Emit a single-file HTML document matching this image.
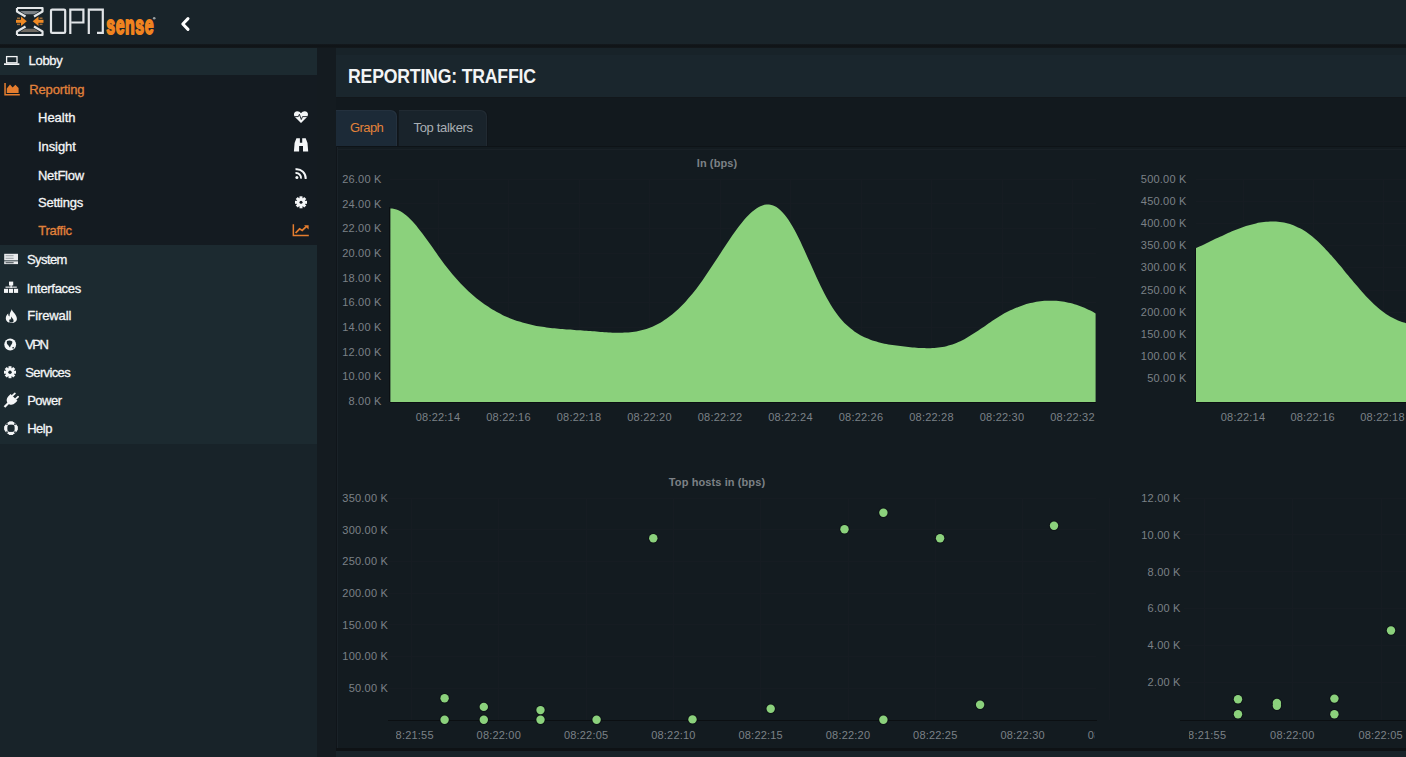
<!DOCTYPE html>
<html><head><meta charset="utf-8"><title>Reporting: Traffic</title>
<style>
*{margin:0;padding:0;box-sizing:border-box}
html,body{width:1406px;height:757px;overflow:hidden;background:#182329;font-family:"Liberation Sans",sans-serif}
.abs{position:absolute}
#hdr{left:0;top:0;width:1406px;height:44px;background:#19242a}
#shadow{left:0;top:44px;width:1406px;height:4px;background:linear-gradient(#14191d,#0f1316 50%,#13181c)}
#sidebase{left:0;top:48px;width:317px;height:709px;background:#182329}
#gap{left:317px;top:48px;width:19px;height:709px;background:#141b20}
.side{left:0;width:317px}
.light{background:#1c2a30}
.dark{background:#141b21}
.t{position:absolute;font-size:13px;line-height:16px;color:#f4f6f7;white-space:nowrap;-webkit-text-stroke:0.3px #f4f6f7}
.t.org{color:#e2823b;-webkit-text-stroke:0.3px #e2823b}
.ic{position:absolute}
#title{left:336px;top:55px;width:1070px;height:42px;background:#1a262d;box-shadow:0 1px 0 #12171b}
#title h1{position:absolute;left:12.3px;top:8.7px;font-size:19.6px;line-height:24px;font-weight:bold;color:#f2f4f5;letter-spacing:-0.2px;white-space:nowrap;transform:scaleX(0.9);transform-origin:0 0}
#tabstrip{left:336px;top:98px;width:1070px;height:48px;background:#12191e}
.tab{position:absolute;top:12px;height:36px;border-radius:0 6px 0 0;box-shadow:inset -1px 1px 0 rgba(255,255,255,0.035), 1px 0 0 #10151a}
.tab span{position:absolute;font-size:13px;line-height:16px;white-space:nowrap}
#tabline{left:336px;top:146px;width:1070px;height:1px;background:#0e1317}
#tabline2{left:337px;top:149px;width:1069px;height:1px;background:#192026}
#pleft{left:336px;top:146px;width:1px;height:602px;background:#10151a}
#panel{left:336px;top:146px;width:1070px;height:602px;background:#131b20;border-left:2px solid #1a2228}
#pbot{left:336px;top:748px;width:1070px;height:3px;background:#0e1215}
.charts{position:absolute;left:0;top:0}
</style></head><body>
<div id="hdr" class="abs">
  <svg class="abs" style="left:0;top:0" width="170" height="44" viewBox="0 0 170 44">
    <!-- hourglass mark -->
    <path d="M17,8 H42.5 V11.5 L34,16.5 M17,8 V11.5 L25.5,16.5" fill="none" stroke="#e3e6e8" stroke-width="2.2" stroke-linejoin="round"/>
    <path d="M17,35 H42.5 V31.5 L34,26.5 M17,35 V31.5 L25.5,26.5" fill="none" stroke="#e3e6e8" stroke-width="2.2" stroke-linejoin="round"/>
    <path d="M20,11 H39.5 L34.5,14.2 H25Z" fill="#7b8186"/>
    <path d="M20,32 H39.5 L34.5,28.8 H25Z" fill="#6f6a62"/>
    <g fill="#f08a24">
      <rect x="16" y="19.8" width="7" height="3"/>
      <path d="M21,16.6 L26.8,21.3 L21,26Z"/>
      <rect x="36.5" y="19.8" width="7" height="3"/>
      <path d="M38.5,16.6 L32.7,21.3 L38.5,26Z"/>
    </g>
    <g fill="#f6a04a" opacity="0.6"><rect x="17" y="17.5" width="3" height="1.5"/><rect x="17" y="23.6" width="3" height="1.5"/><rect x="39.5" y="17.5" width="3" height="1.5"/><rect x="39.5" y="23.6" width="3" height="1.5"/></g>
    <!-- OPN -->
    <g fill="none" stroke="#e1e4e7" stroke-width="2.2">
      <rect x="51" y="9.6" width="14.2" height="23.3" rx="1.2"/>
      <path d="M70.3,34 V9.6 H83.4 V22.5 H71.5"/>
      <path d="M88.8,34 V9.6 H102.8 V32.9 H97"/>
    </g>
    <text x="0" y="0" font-family="Liberation Sans, sans-serif" font-weight="bold" font-size="26.5" fill="#f0841f" stroke="#f0841f" stroke-width="1.8" stroke-linejoin="round" transform="translate(106.3,34.4) scale(0.6,1)" letter-spacing="0.9">sense</text>
    <circle cx="154.2" cy="18.3" r="1.3" fill="#9aa0a4"/>
  </svg>
  <svg class="abs" style="left:178px;top:16px" width="14" height="16" viewBox="0 0 14 16"><path d="M10,2.6 L4.8,8 L10,13.4" fill="none" stroke="#fff" stroke-width="3" stroke-linecap="round" stroke-linejoin="round"/></svg>
</div>
<div id="shadow" class="abs"></div>
<div id="sidebase" class="abs"></div>
<div id="gap" class="abs"></div>
<div class="abs side light" style="top:48px;height:27px"></div>
<div class="abs side dark" style="top:75px;height:170px"></div>
<div class="abs side light" style="top:245px;height:199px"></div>

<!-- left icons -->
<svg class="ic" style="left:0;top:48px" width="24" height="400" viewBox="0 48 24 400">
  <!-- laptop -->
  <rect x="6.6" y="56.6" width="10.4" height="6.2" fill="none" stroke="#f4f6f7" stroke-width="1.3"/>
  <rect x="4" y="63.3" width="15.4" height="1.7" fill="#f4f6f7"/>
  <!-- area chart (orange) -->
  <path d="M4.3,83 H5.8 V94 H19.8 V95.6 H4.3Z" fill="#e47d2f"/>
  <path d="M6.8,93 V88.5 L10,84.6 L12.6,87.6 L15.4,84.8 L18.6,88 V93Z" fill="#e47d2f"/>
  <!-- system (server) -->
  <rect x="4.2" y="253.8" width="13.8" height="6.6" fill="#e9ebed"/>
  <rect x="4.2" y="261.3" width="13.8" height="2.8" fill="#e9ebed"/>
  <g fill="#8e969b"><rect x="5.6" y="255.3" width="8" height="0.9"/><rect x="5.6" y="257.8" width="8" height="0.9"/></g>
  <rect x="5.6" y="262.3" width="8" height="0.9" fill="#2a343a"/>
  <!-- sitemap -->
  <g fill="#f4f6f7">
    <rect x="9" y="281.6" width="4.2" height="3.9"/>
    <rect x="4" y="288.8" width="4.1" height="4.1"/><rect x="9" y="288.8" width="4.1" height="4.1"/><rect x="14" y="288.8" width="4.1" height="4.1"/>
    <rect x="10.5" y="285" width="1.2" height="3"/><rect x="5.5" y="286.6" width="11.3" height="1.1"/>
  </g>
  <!-- fire -->
  <path d="M11.8,309.3 C12.6,312.5 16.9,314.5 16.9,318.8 C16.9,321.3 14.8,323 11.6,323 C8.2,323 5.8,321.2 5.8,318.3 C5.8,316.2 7,314.6 8.3,313.6 C8.1,315 8.6,316.2 9.5,316.6 C9.3,313.6 10.9,311.5 11.8,309.3Z" fill="#f4f6f7"/>
  <path d="M11.4,316.5 C11.9,318.3 13.8,319.2 13.6,321 C13.4,322.2 12.5,322.6 11.5,322.6 C10.2,322.6 9.1,321.8 9.2,320.5 C9.3,319.5 9.9,319 10.4,318.7 C10.5,319.4 10.8,319.8 11.2,319.9 C10.9,318.5 11.2,317.4 11.4,316.5Z" fill="#1c2a30"/>
  <!-- globe -->
  <circle cx="10.2" cy="344.5" r="5.9" fill="#f4f6f7"/>
  <path d="M7,341 C8.6,340.2 10.8,340.3 12.3,341.6 C12.6,343.2 11.6,344.7 10.6,345.8 L10,347.6 C9,346.4 8.4,345 7.3,344.2 C6.7,343.2 6.7,341.8 7,341Z M12,347.6 L14.2,346.8 L13.2,349Z" fill="#1c2a30"/>
  <!-- gear -->
  <g transform="translate(10,372.2)"><circle r="4.3" fill="#f4f6f7"/><g fill="#f4f6f7"><rect x="-1.5" y="-6" width="3" height="12"/><rect x="-1.5" y="-6" width="3" height="12" transform="rotate(45)"/><rect x="-1.5" y="-6" width="3" height="12" transform="rotate(90)"/><rect x="-1.5" y="-6" width="3" height="12" transform="rotate(135)"/></g><circle r="1.7" fill="#1c2a30"/></g>
  <!-- plug -->
  <g transform="translate(11.2,400.3) rotate(45)" fill="#f4f6f7">
    <rect x="-3.2" y="-8.2" width="1.8" height="4.6" rx="0.6"/><rect x="1.4" y="-8.2" width="1.8" height="4.6" rx="0.6"/>
    <path d="M-4.8,-4 H4.8 V-1.2 C4.8,2.4 2.6,4.4 0,4.4 C-2.6,4.4 -4.8,2.4 -4.8,-1.2Z"/>
    <rect x="-1.1" y="3.5" width="2.2" height="6"/>
  </g>
  <!-- life ring -->
  <circle cx="11" cy="428.2" r="5.3" fill="none" stroke="#f4f6f7" stroke-width="2.6"/>
  <g fill="#f4f6f7"><rect x="9" y="421.5" width="4" height="3"/><rect x="9" y="431.9" width="4" height="3"/><rect x="4.3" y="426.2" width="3" height="4"/><rect x="14.7" y="426.2" width="3" height="4"/></g>
  <g fill="#1c2a30"><rect x="6.2" y="423.4" width="1.6" height="1.6" transform="rotate(45 7 424.2)"/><rect x="14.2" y="423.4" width="1.6" height="1.6" transform="rotate(45 15 424.2)"/><rect x="6.2" y="431.4" width="1.6" height="1.6" transform="rotate(45 7 432.2)"/><rect x="14.2" y="431.4" width="1.6" height="1.6" transform="rotate(45 15 432.2)"/></g>
</svg>
<!-- right icons -->
<svg class="ic" style="left:286px;top:105px" width="30" height="140" viewBox="286 105 30 140">
  <!-- heartbeat -->
  <path d="M301,123 L295.2,117.2 C293.2,115.2 293.6,111.4 297.2,111.3 C298.8,111.3 300.2,112.2 301,113.2 C301.8,112.2 303.2,111.3 304.8,111.3 C308.4,111.4 308.8,115.2 306.8,117.2Z" fill="#f4f6f7"/>
  <path d="M294.5,116.6 H298.3 L299.4,114.3 L301.3,119.5 L302.5,116.6 H307.4" fill="none" stroke="#151b21" stroke-width="0.9"/>
  <!-- binoculars -->
  <path d="M293.9,151.5 L294.6,143 L296.4,138.3 H299.9 V142.7 H302.2 V138.3 H305.7 L307.5,143 L308.2,151.5 H303 V146 H299.1 V151.5Z" fill="#f4f6f7"/>
  <!-- rss -->
  <circle cx="296.9" cy="177.6" r="1.5" fill="#f4f6f7"/>
  <path d="M295.5,173 A5,5 0 0 1 301,178.6" fill="none" stroke="#f4f6f7" stroke-width="1.9"/>
  <path d="M295.5,169.3 A9,9 0 0 1 305.7,179" fill="none" stroke="#f4f6f7" stroke-width="1.9"/>
  <!-- gear -->
  <g transform="translate(301,202.3)"><circle r="4.3" fill="#f4f6f7"/><g fill="#f4f6f7"><rect x="-1.5" y="-6" width="3" height="12"/><rect x="-1.5" y="-6" width="3" height="12" transform="rotate(45)"/><rect x="-1.5" y="-6" width="3" height="12" transform="rotate(90)"/><rect x="-1.5" y="-6" width="3" height="12" transform="rotate(135)"/></g><circle r="1.5" fill="#151b21"/></g>
  <!-- line chart orange -->
  <path d="M292.6,224.3 H294.1 V234.7 H308.8 V236.2 H292.6Z" fill="#e47d2f"/>
  <path d="M295.6,233 L299.6,228.8 L302.2,230.4 L306.2,226.6" fill="none" stroke="#e47d2f" stroke-width="1.8"/>
  <path d="M304,225.2 H308.6 V229.6Z" fill="#e47d2f"/>
</svg>

<!-- menu texts -->
<div class="t" style="left:28.6px;top:53px;letter-spacing:-0.33px">Lobby</div>
<div class="t org" style="left:29.3px;top:82px;letter-spacing:-0.15px">Reporting</div>
<div class="t" style="left:38px;top:110px;letter-spacing:0px">Health</div>
<div class="t" style="left:38px;top:138.5px;letter-spacing:-0.08px">Insight</div>
<div class="t" style="left:38px;top:167.5px;letter-spacing:-0.27px">NetFlow</div>
<div class="t" style="left:38px;top:195px;letter-spacing:-0.26px">Settings</div>
<div class="t org" style="left:38.3px;top:223px;letter-spacing:-0.28px">Traffic</div>
<div class="t" style="left:27px;top:252.4px;letter-spacing:-0.58px">System</div>
<div class="t" style="left:26.8px;top:281px;letter-spacing:-0.29px">Interfaces</div>
<div class="t" style="left:27.3px;top:308.4px;letter-spacing:-0.1px">Firewall</div>
<div class="t" style="left:25.3px;top:337.3px;letter-spacing:-1.6px">VPN</div>
<div class="t" style="left:25.3px;top:365.3px;letter-spacing:-0.64px">Services</div>
<div class="t" style="left:27.2px;top:393.3px;letter-spacing:-0.5px">Power</div>
<div class="t" style="left:27.2px;top:421.3px;letter-spacing:-0.5px">Help</div>

<div id="title" class="abs"><h1>REPORTING: TRAFFIC</h1></div>
<div id="tabstrip" class="abs">
  <div class="tab" style="left:0;width:61px;background:#1c2a37"><span style="left:14px;top:10px;color:#e3823a;letter-spacing:-0.57px">Graph</span></div>
  <div class="tab" style="left:63px;width:88px;background:#19232b"><span style="left:14.5px;top:10px;color:#a9afb4;letter-spacing:-0.33px">Top talkers</span></div>
</div>
<div id="panel" class="abs"></div><div id="tabline" class="abs"></div><div id="tabline2" class="abs"></div><div id="pleft" class="abs"></div>
<div id="pbot" class="abs"></div>
<svg class="charts" width="1406" height="757" viewBox="0 0 1406 757"><defs><clipPath id="c1"><rect x="396" y="700" width="698.6" height="50"/></clipPath><clipPath id="a1"><rect x="390" y="150" width="705.6" height="260"/></clipPath><clipPath id="c2"><rect x="1189" y="700" width="300" height="50"/></clipPath></defs><g stroke="#161c22" stroke-width="1" shape-rendering="crispEdges"><line x1="390" y1="179.0" x2="1096" y2="179.0"/><line x1="390" y1="203.7" x2="1096" y2="203.7"/><line x1="390" y1="228.3" x2="1096" y2="228.3"/><line x1="390" y1="253.0" x2="1096" y2="253.0"/><line x1="390" y1="277.7" x2="1096" y2="277.7"/><line x1="390" y1="302.4" x2="1096" y2="302.4"/><line x1="390" y1="327.0" x2="1096" y2="327.0"/><line x1="390" y1="351.7" x2="1096" y2="351.7"/><line x1="390" y1="376.4" x2="1096" y2="376.4"/><line x1="390" y1="401.0" x2="1096" y2="401.0"/><line x1="438.0" y1="179" x2="438.0" y2="402"/><line x1="508.5" y1="179" x2="508.5" y2="402"/><line x1="579.0" y1="179" x2="579.0" y2="402"/><line x1="649.5" y1="179" x2="649.5" y2="402"/><line x1="720.0" y1="179" x2="720.0" y2="402"/><line x1="790.5" y1="179" x2="790.5" y2="402"/><line x1="861.0" y1="179" x2="861.0" y2="402"/><line x1="931.5" y1="179" x2="931.5" y2="402"/><line x1="1002.0" y1="179" x2="1002.0" y2="402"/><line x1="1072.5" y1="179" x2="1072.5" y2="402"/><line x1="1196" y1="179.0" x2="1406" y2="179.0"/><line x1="1196" y1="201.2" x2="1406" y2="201.2"/><line x1="1196" y1="223.4" x2="1406" y2="223.4"/><line x1="1196" y1="245.6" x2="1406" y2="245.6"/><line x1="1196" y1="267.8" x2="1406" y2="267.8"/><line x1="1196" y1="290.0" x2="1406" y2="290.0"/><line x1="1196" y1="312.2" x2="1406" y2="312.2"/><line x1="1196" y1="334.4" x2="1406" y2="334.4"/><line x1="1196" y1="356.6" x2="1406" y2="356.6"/><line x1="1196" y1="378.8" x2="1406" y2="378.8"/><line x1="1243" y1="179" x2="1243" y2="402"/><line x1="1313" y1="179" x2="1313" y2="402"/><line x1="1383" y1="179" x2="1383" y2="402"/><line x1="388" y1="498.0" x2="1096" y2="498.0"/><line x1="388" y1="529.7" x2="1096" y2="529.7"/><line x1="388" y1="561.3" x2="1096" y2="561.3"/><line x1="388" y1="593.0" x2="1096" y2="593.0"/><line x1="388" y1="624.7" x2="1096" y2="624.7"/><line x1="388" y1="656.4" x2="1096" y2="656.4"/><line x1="388" y1="688.0" x2="1096" y2="688.0"/><line x1="411.5" y1="498" x2="411.5" y2="720"/><line x1="498.8" y1="498" x2="498.8" y2="720"/><line x1="586.1" y1="498" x2="586.1" y2="720"/><line x1="673.4" y1="498" x2="673.4" y2="720"/><line x1="760.7" y1="498" x2="760.7" y2="720"/><line x1="848.0" y1="498" x2="848.0" y2="720"/><line x1="935.3" y1="498" x2="935.3" y2="720"/><line x1="1022.6" y1="498" x2="1022.6" y2="720"/><line x1="1109.9" y1="498" x2="1109.9" y2="720"/><line x1="1184" y1="498.0" x2="1406" y2="498.0"/><line x1="1184" y1="534.9" x2="1406" y2="534.9"/><line x1="1184" y1="571.7" x2="1406" y2="571.7"/><line x1="1184" y1="608.5" x2="1406" y2="608.5"/><line x1="1184" y1="645.4" x2="1406" y2="645.4"/><line x1="1184" y1="682.2" x2="1406" y2="682.2"/><line x1="1204" y1="498" x2="1204" y2="720"/><line x1="1292" y1="498" x2="1292" y2="720"/><line x1="1381" y1="498" x2="1381" y2="720"/></g><path clip-path="url(#a1)" d="M390.4,208.5 C391.1,208.6 393.1,208.6 394.4,208.9 C395.7,209.2 397.1,209.6 398.4,210.2 C399.7,210.8 401.1,211.6 402.4,212.5 C403.7,213.4 405.1,214.4 406.4,215.5 C407.7,216.7 409.1,217.9 410.4,219.3 C411.7,220.6 413.1,222.1 414.4,223.6 C415.7,225.1 417.1,226.7 418.4,228.4 C419.7,230.0 421.1,231.8 422.4,233.5 C423.7,235.3 425.1,237.2 426.4,239.0 C427.7,240.8 429.1,242.7 430.4,244.6 C431.7,246.5 433.1,248.4 434.4,250.3 C435.7,252.2 437.1,254.1 438.4,256.0 C439.7,257.8 441.1,259.7 442.4,261.5 C443.7,263.3 445.1,265.1 446.4,266.8 C447.7,268.5 449.1,270.2 450.4,271.8 C451.7,273.4 453.1,275.0 454.4,276.5 C455.7,278.1 457.1,279.6 458.4,281.0 C459.7,282.5 461.1,283.9 462.4,285.2 C463.7,286.6 465.1,287.9 466.4,289.2 C467.7,290.5 469.1,291.7 470.4,292.9 C471.7,294.1 473.1,295.3 474.4,296.4 C475.7,297.6 477.1,298.6 478.4,299.7 C479.7,300.8 481.1,301.8 482.4,302.7 C483.7,303.7 485.1,304.7 486.4,305.6 C487.7,306.5 489.1,307.3 490.4,308.2 C491.7,309.0 493.1,309.8 494.4,310.6 C495.7,311.4 497.1,312.1 498.4,312.8 C499.7,313.5 501.1,314.2 502.4,314.9 C503.7,315.5 505.1,316.1 506.4,316.7 C507.7,317.3 509.1,317.9 510.4,318.4 C511.7,318.9 513.1,319.4 514.4,319.9 C515.7,320.4 517.1,320.8 518.4,321.3 C519.7,321.7 521.1,322.1 522.4,322.5 C523.7,322.9 525.1,323.2 526.4,323.6 C527.7,323.9 529.1,324.3 530.4,324.6 C531.7,324.9 533.1,325.1 534.4,325.4 C535.7,325.7 537.1,325.9 538.4,326.2 C539.7,326.4 541.1,326.6 542.4,326.8 C543.7,327.0 545.1,327.2 546.4,327.4 C547.7,327.6 549.1,327.7 550.4,327.9 C551.7,328.1 553.1,328.2 554.4,328.3 C555.7,328.5 557.1,328.6 558.4,328.7 C559.7,328.8 561.1,328.9 562.4,329.1 C563.7,329.2 565.1,329.3 566.4,329.4 C567.7,329.5 569.1,329.5 570.4,329.6 C571.7,329.7 573.1,329.8 574.4,329.9 C575.7,330.0 577.1,330.1 578.4,330.2 C579.7,330.2 581.1,330.3 582.4,330.4 C583.7,330.5 585.1,330.6 586.4,330.7 C587.7,330.8 589.1,330.9 590.4,331.0 C591.7,331.1 593.1,331.2 594.4,331.3 C595.7,331.4 597.1,331.6 598.4,331.7 C599.7,331.8 601.1,331.9 602.4,332.0 C603.7,332.1 605.1,332.2 606.4,332.3 C607.7,332.4 609.1,332.5 610.4,332.5 C611.7,332.6 613.1,332.7 614.4,332.7 C615.7,332.8 617.1,332.8 618.4,332.8 C619.7,332.8 621.1,332.8 622.4,332.7 C623.7,332.7 625.1,332.7 626.4,332.6 C627.7,332.5 629.1,332.4 630.4,332.2 C631.7,332.1 633.1,331.9 634.4,331.7 C635.7,331.5 637.1,331.3 638.4,331.0 C639.7,330.7 641.1,330.4 642.4,330.1 C643.7,329.7 645.1,329.3 646.4,328.9 C647.7,328.4 649.1,328.0 650.4,327.4 C651.7,326.9 653.1,326.3 654.4,325.7 C655.7,325.1 657.1,324.4 658.4,323.7 C659.7,323.0 661.1,322.2 662.4,321.4 C663.7,320.5 665.1,319.6 666.4,318.7 C667.7,317.8 669.1,316.8 670.4,315.8 C671.7,314.7 673.1,313.6 674.4,312.5 C675.7,311.3 677.1,310.1 678.4,308.9 C679.7,307.6 681.1,306.3 682.4,305.0 C683.7,303.6 685.1,302.2 686.4,300.7 C687.7,299.2 689.1,297.7 690.4,296.1 C691.7,294.5 693.1,292.9 694.4,291.2 C695.7,289.5 697.1,287.8 698.4,286.0 C699.7,284.1 701.1,282.3 702.4,280.4 C703.7,278.5 705.1,276.6 706.4,274.6 C707.7,272.6 709.1,270.6 710.4,268.6 C711.7,266.6 713.1,264.6 714.4,262.5 C715.7,260.5 717.1,258.4 718.4,256.4 C719.7,254.3 721.1,252.3 722.4,250.2 C723.7,248.2 725.1,246.2 726.4,244.2 C727.7,242.2 729.1,240.2 730.4,238.2 C731.7,236.3 733.1,234.4 734.4,232.5 C735.7,230.6 737.1,228.8 738.4,227.0 C739.7,225.3 741.1,223.6 742.4,222.0 C743.7,220.3 745.1,218.8 746.4,217.3 C747.7,215.9 749.1,214.5 750.4,213.3 C751.7,212.0 753.1,210.9 754.4,209.9 C755.7,208.8 757.1,207.9 758.4,207.2 C759.7,206.4 761.1,205.8 762.4,205.4 C763.7,204.9 765.1,204.6 766.4,204.5 C767.7,204.4 769.1,204.5 770.4,204.7 C771.7,205.0 773.1,205.4 774.4,206.1 C775.7,206.7 777.1,207.5 778.4,208.6 C779.7,209.6 781.1,210.8 782.4,212.2 C783.7,213.6 785.1,215.2 786.4,217.0 C787.7,218.8 789.1,220.7 790.4,222.9 C791.7,225.0 793.1,227.4 794.4,229.8 C795.7,232.3 797.1,234.9 798.4,237.6 C799.7,240.2 801.1,243.1 802.4,245.9 C803.7,248.8 805.1,251.7 806.4,254.7 C807.7,257.6 809.1,260.7 810.4,263.6 C811.7,266.6 813.1,269.6 814.4,272.5 C815.7,275.5 817.1,278.4 818.4,281.2 C819.7,284.1 821.1,286.9 822.4,289.5 C823.7,292.2 825.1,294.8 826.4,297.3 C827.7,299.8 829.1,302.1 830.4,304.3 C831.7,306.6 833.1,308.6 834.4,310.6 C835.7,312.5 837.1,314.3 838.4,316.0 C839.7,317.7 841.1,319.3 842.4,320.7 C843.7,322.2 845.1,323.6 846.4,324.8 C847.7,326.1 849.1,327.3 850.4,328.3 C851.7,329.4 853.1,330.4 854.4,331.4 C855.7,332.3 857.1,333.2 858.4,334.0 C859.7,334.8 861.1,335.5 862.4,336.2 C863.7,336.9 865.1,337.5 866.4,338.1 C867.7,338.7 869.1,339.2 870.4,339.7 C871.7,340.2 873.1,340.7 874.4,341.1 C875.7,341.5 877.1,341.9 878.4,342.3 C879.7,342.6 881.1,342.9 882.4,343.2 C883.7,343.5 885.1,343.8 886.4,344.0 C887.7,344.3 889.1,344.5 890.4,344.7 C891.7,344.9 893.1,345.1 894.4,345.3 C895.7,345.5 897.1,345.6 898.4,345.8 C899.7,346.0 901.1,346.1 902.4,346.3 C903.7,346.5 905.1,346.6 906.4,346.8 C907.7,346.9 909.1,347.1 910.4,347.2 C911.7,347.4 913.1,347.5 914.4,347.6 C915.7,347.7 917.1,347.8 918.4,347.9 C919.7,348.0 921.1,348.1 922.4,348.1 C923.7,348.2 925.1,348.2 926.4,348.2 C927.7,348.2 929.1,348.2 930.4,348.2 C931.7,348.1 933.1,348.1 934.4,348.0 C935.7,347.9 937.1,347.7 938.4,347.6 C939.7,347.4 941.1,347.2 942.4,347.0 C943.7,346.8 945.1,346.5 946.4,346.2 C947.7,345.9 949.1,345.5 950.4,345.1 C951.7,344.7 953.1,344.3 954.4,343.8 C955.7,343.3 957.1,342.7 958.4,342.1 C959.7,341.5 961.1,340.9 962.4,340.2 C963.7,339.5 965.1,338.8 966.4,338.0 C967.7,337.3 969.1,336.5 970.4,335.6 C971.7,334.8 973.1,334.0 974.4,333.1 C975.7,332.2 977.1,331.3 978.4,330.4 C979.7,329.5 981.1,328.6 982.4,327.7 C983.7,326.8 985.1,325.8 986.4,324.9 C987.7,324.0 989.1,323.1 990.4,322.2 C991.7,321.3 993.1,320.4 994.4,319.5 C995.7,318.6 997.1,317.8 998.4,316.9 C999.7,316.1 1001.1,315.3 1002.4,314.5 C1003.7,313.8 1005.1,313.0 1006.4,312.3 C1007.7,311.6 1009.1,311.0 1010.4,310.3 C1011.7,309.7 1013.1,309.1 1014.4,308.5 C1015.7,307.9 1017.1,307.4 1018.4,306.9 C1019.7,306.3 1021.1,305.9 1022.4,305.4 C1023.7,305.0 1025.1,304.5 1026.4,304.1 C1027.7,303.8 1029.1,303.4 1030.4,303.1 C1031.7,302.8 1033.1,302.5 1034.4,302.2 C1035.7,301.9 1037.1,301.7 1038.4,301.5 C1039.7,301.3 1041.1,301.2 1042.4,301.0 C1043.7,300.9 1045.1,300.8 1046.4,300.8 C1047.7,300.7 1049.1,300.7 1050.4,300.7 C1051.7,300.7 1053.1,300.7 1054.4,300.8 C1055.7,300.8 1057.1,300.9 1058.4,301.1 C1059.7,301.2 1061.1,301.4 1062.4,301.5 C1063.7,301.7 1065.1,302.0 1066.4,302.2 C1067.7,302.5 1069.1,302.8 1070.4,303.1 C1071.7,303.5 1073.1,303.8 1074.4,304.2 C1075.7,304.6 1077.1,305.0 1078.4,305.5 C1079.7,306.0 1081.1,306.5 1082.4,307.0 C1083.7,307.5 1085.1,308.1 1086.4,308.7 C1087.7,309.3 1089.1,309.9 1090.4,310.6 C1091.7,311.2 1093.1,311.9 1094.4,312.7 C1095.7,313.4 1097.7,314.6 1098.4,314.9 L1100,402 L390.4,402 Z" fill="#8bd17c"/><path d="M1196.0,248.1 C1196.7,247.8 1198.7,246.9 1200.0,246.3 C1201.3,245.6 1202.7,245.0 1204.0,244.4 C1205.3,243.7 1206.7,243.1 1208.0,242.5 C1209.3,241.8 1210.7,241.2 1212.0,240.5 C1213.3,239.9 1214.7,239.2 1216.0,238.6 C1217.3,238.0 1218.7,237.3 1220.0,236.7 C1221.3,236.1 1222.7,235.5 1224.0,234.9 C1225.3,234.3 1226.7,233.7 1228.0,233.1 C1229.3,232.5 1230.7,231.9 1232.0,231.3 C1233.3,230.8 1234.7,230.2 1236.0,229.7 C1237.3,229.2 1238.7,228.7 1240.0,228.2 C1241.3,227.7 1242.7,227.2 1244.0,226.8 C1245.3,226.3 1246.7,225.9 1248.0,225.5 C1249.3,225.1 1250.7,224.7 1252.0,224.4 C1253.3,224.0 1254.7,223.7 1256.0,223.4 C1257.3,223.1 1258.7,222.8 1260.0,222.6 C1261.3,222.4 1262.7,222.2 1264.0,222.0 C1265.3,221.9 1266.7,221.7 1268.0,221.7 C1269.3,221.6 1270.7,221.5 1272.0,221.5 C1273.3,221.5 1274.7,221.5 1276.0,221.6 C1277.3,221.7 1278.7,221.8 1280.0,222.0 C1281.3,222.2 1282.7,222.4 1284.0,222.6 C1285.3,222.9 1286.7,223.2 1288.0,223.6 C1289.3,223.9 1290.7,224.4 1292.0,224.8 C1293.3,225.3 1294.7,225.8 1296.0,226.4 C1297.3,227.0 1298.7,227.6 1300.0,228.3 C1301.3,229.0 1302.7,229.8 1304.0,230.6 C1305.3,231.4 1306.7,232.3 1308.0,233.2 C1309.3,234.2 1310.7,235.2 1312.0,236.3 C1313.3,237.3 1314.7,238.5 1316.0,239.7 C1317.3,240.9 1318.7,242.1 1320.0,243.4 C1321.3,244.7 1322.7,246.1 1324.0,247.4 C1325.3,248.8 1326.7,250.3 1328.0,251.7 C1329.3,253.2 1330.7,254.7 1332.0,256.2 C1333.3,257.7 1334.7,259.3 1336.0,260.8 C1337.3,262.4 1338.7,264.0 1340.0,265.6 C1341.3,267.1 1342.7,268.8 1344.0,270.4 C1345.3,272.0 1346.7,273.6 1348.0,275.2 C1349.3,276.8 1350.7,278.4 1352.0,280.0 C1353.3,281.6 1354.7,283.2 1356.0,284.8 C1357.3,286.3 1358.7,287.9 1360.0,289.4 C1361.3,290.9 1362.7,292.4 1364.0,293.9 C1365.3,295.3 1366.7,296.8 1368.0,298.2 C1369.3,299.6 1370.7,300.9 1372.0,302.2 C1373.3,303.5 1374.7,304.8 1376.0,306.0 C1377.3,307.2 1378.7,308.3 1380.0,309.4 C1381.3,310.5 1382.7,311.5 1384.0,312.5 C1385.3,313.4 1386.7,314.4 1388.0,315.2 C1389.3,316.1 1390.7,316.8 1392.0,317.6 C1393.3,318.3 1394.7,319.0 1396.0,319.6 C1397.3,320.2 1398.7,320.8 1400.0,321.3 C1401.3,321.8 1402.7,322.2 1404.0,322.6 C1405.3,323.0 1406.7,323.3 1408.0,323.6 C1409.3,323.9 1411.3,324.2 1412.0,324.3 L1414,402 L1196,402 Z" fill="#8bd17c"/><g stroke="#0b0f12" stroke-width="1" shape-rendering="crispEdges"><line x1="390" y1="402.5" x2="1096" y2="402.5"/><line x1="1196" y1="402.5" x2="1406" y2="402.5"/><line x1="388" y1="720.5" x2="1097" y2="720.5"/><line x1="1180" y1="720.5" x2="1406" y2="720.5"/><line x1="389.5" y1="207" x2="389.5" y2="402"/><line x1="1195.5" y1="248" x2="1195.5" y2="402"/></g><g fill="#080b0d" opacity="0.45"><circle cx="444.6" cy="698.3" r="5.2"/><circle cx="444.6" cy="719.7" r="5.2"/><circle cx="483.8" cy="706.9" r="5.2"/><circle cx="483.8" cy="719.7" r="5.2"/><circle cx="540.5" cy="710.1" r="5.2"/><circle cx="540.5" cy="719.7" r="5.2"/><circle cx="596.6" cy="719.7" r="5.2"/><circle cx="653.3" cy="538.2" r="5.2"/><circle cx="692.5" cy="719.4" r="5.2"/><circle cx="770.7" cy="708.7" r="5.2"/><circle cx="844.5" cy="529.2" r="5.2"/><circle cx="883.4" cy="512.8" r="5.2"/><circle cx="883.4" cy="719.7" r="5.2"/><circle cx="940.1" cy="538.2" r="5.2"/><circle cx="980.1" cy="704.8" r="5.2"/><circle cx="1054.0" cy="525.7" r="5.2"/><circle cx="1238.0" cy="699.3" r="5.2"/><circle cx="1238.0" cy="714.3" r="5.2"/><circle cx="1276.9" cy="702.9" r="5.2"/><circle cx="1276.9" cy="705.7" r="5.2"/><circle cx="1334.4" cy="698.6" r="5.2"/><circle cx="1334.4" cy="714.3" r="5.2"/><circle cx="1391.0" cy="630.5" r="5.2"/></g><g fill="#8bd17c"><circle cx="444.6" cy="698.3" r="4.2"/><circle cx="444.6" cy="719.7" r="4.2"/><circle cx="483.8" cy="706.9" r="4.2"/><circle cx="483.8" cy="719.7" r="4.2"/><circle cx="540.5" cy="710.1" r="4.2"/><circle cx="540.5" cy="719.7" r="4.2"/><circle cx="596.6" cy="719.7" r="4.2"/><circle cx="653.3" cy="538.2" r="4.2"/><circle cx="692.5" cy="719.4" r="4.2"/><circle cx="770.7" cy="708.7" r="4.2"/><circle cx="844.5" cy="529.2" r="4.2"/><circle cx="883.4" cy="512.8" r="4.2"/><circle cx="883.4" cy="719.7" r="4.2"/><circle cx="940.1" cy="538.2" r="4.2"/><circle cx="980.1" cy="704.8" r="4.2"/><circle cx="1054.0" cy="525.7" r="4.2"/><circle cx="1238.0" cy="699.3" r="4.2"/><circle cx="1238.0" cy="714.3" r="4.2"/><circle cx="1276.9" cy="702.9" r="4.2"/><circle cx="1276.9" cy="705.7" r="4.2"/><circle cx="1334.4" cy="698.6" r="4.2"/><circle cx="1334.4" cy="714.3" r="4.2"/><circle cx="1391.0" cy="630.5" r="4.2"/></g><g fill="#7b8187" font-family="Liberation Sans, sans-serif" font-size="11" letter-spacing="0.2"><text x="381.5" y="183.0" text-anchor="end">26.00 K</text><text x="381.5" y="207.7" text-anchor="end">24.00 K</text><text x="381.5" y="232.3" text-anchor="end">22.00 K</text><text x="381.5" y="257.0" text-anchor="end">20.00 K</text><text x="381.5" y="281.7" text-anchor="end">18.00 K</text><text x="381.5" y="306.4" text-anchor="end">16.00 K</text><text x="381.5" y="331.0" text-anchor="end">14.00 K</text><text x="381.5" y="355.7" text-anchor="end">12.00 K</text><text x="381.5" y="380.4" text-anchor="end">10.00 K</text><text x="381.5" y="405.0" text-anchor="end">8.00 K</text><text x="438.0" y="421.0" text-anchor="middle">08:22:14</text><text x="508.5" y="421.0" text-anchor="middle">08:22:16</text><text x="579.0" y="421.0" text-anchor="middle">08:22:18</text><text x="649.5" y="421.0" text-anchor="middle">08:22:20</text><text x="720.0" y="421.0" text-anchor="middle">08:22:22</text><text x="790.5" y="421.0" text-anchor="middle">08:22:24</text><text x="861.0" y="421.0" text-anchor="middle">08:22:26</text><text x="931.5" y="421.0" text-anchor="middle">08:22:28</text><text x="1002.0" y="421.0" text-anchor="middle">08:22:30</text><text x="1072.5" y="421.0" text-anchor="middle">08:22:32</text><text x="1186.5" y="182.5" text-anchor="end">500.00 K</text><text x="1186.5" y="204.7" text-anchor="end">450.00 K</text><text x="1186.5" y="226.9" text-anchor="end">400.00 K</text><text x="1186.5" y="249.1" text-anchor="end">350.00 K</text><text x="1186.5" y="271.3" text-anchor="end">300.00 K</text><text x="1186.5" y="293.5" text-anchor="end">250.00 K</text><text x="1186.5" y="315.7" text-anchor="end">200.00 K</text><text x="1186.5" y="337.9" text-anchor="end">150.00 K</text><text x="1186.5" y="360.1" text-anchor="end">100.00 K</text><text x="1186.5" y="382.3" text-anchor="end">50.00 K</text><text x="1243.0" y="421.0" text-anchor="middle">08:22:14</text><text x="1312.6" y="421.0" text-anchor="middle">08:22:16</text><text x="1382.5" y="421.0" text-anchor="middle">08:22:18</text><text x="388.0" y="502.0" text-anchor="end">350.00 K</text><text x="388.0" y="533.7" text-anchor="end">300.00 K</text><text x="388.0" y="565.3" text-anchor="end">250.00 K</text><text x="388.0" y="597.0" text-anchor="end">200.00 K</text><text x="388.0" y="628.7" text-anchor="end">150.00 K</text><text x="388.0" y="660.4" text-anchor="end">100.00 K</text><text x="388.0" y="692.0" text-anchor="end">50.00 K</text><text x="1180.6" y="501.8" text-anchor="end">12.00 K</text><text x="1180.6" y="538.7" text-anchor="end">10.00 K</text><text x="1180.6" y="575.6" text-anchor="end">8.00 K</text><text x="1180.6" y="612.4" text-anchor="end">6.00 K</text><text x="1180.6" y="649.3" text-anchor="end">4.00 K</text><text x="1180.6" y="686.2" text-anchor="end">2.00 K</text></g><g clip-path="url(#c1)" fill="#7b8187" font-family="Liberation Sans, sans-serif" font-size="11" letter-spacing="0.2"><text x="411.5" y="739" text-anchor="middle">08:21:55</text><text x="498.8" y="739" text-anchor="middle">08:22:00</text><text x="586.1" y="739" text-anchor="middle">08:22:05</text><text x="673.4" y="739" text-anchor="middle">08:22:10</text><text x="760.7" y="739" text-anchor="middle">08:22:15</text><text x="848.0" y="739" text-anchor="middle">08:22:20</text><text x="935.3" y="739" text-anchor="middle">08:22:25</text><text x="1022.6" y="739" text-anchor="middle">08:22:30</text><text x="1109.9" y="739" text-anchor="middle">08:22:35</text></g><g clip-path="url(#c2)" fill="#7b8187" font-family="Liberation Sans, sans-serif" font-size="11" letter-spacing="0.2"><text x="1204.0" y="739" text-anchor="middle">08:21:55</text><text x="1292.3" y="739" text-anchor="middle">08:22:00</text><text x="1380.6" y="739" text-anchor="middle">08:22:05</text></g><g fill="#7c8186" font-family="Liberation Sans, sans-serif" font-size="11" font-weight="bold" text-anchor="middle" letter-spacing="0.1"><text x="717" y="167">In (bps)</text><text x="717" y="486">Top hosts in (bps)</text></g></svg>
</body></html>
